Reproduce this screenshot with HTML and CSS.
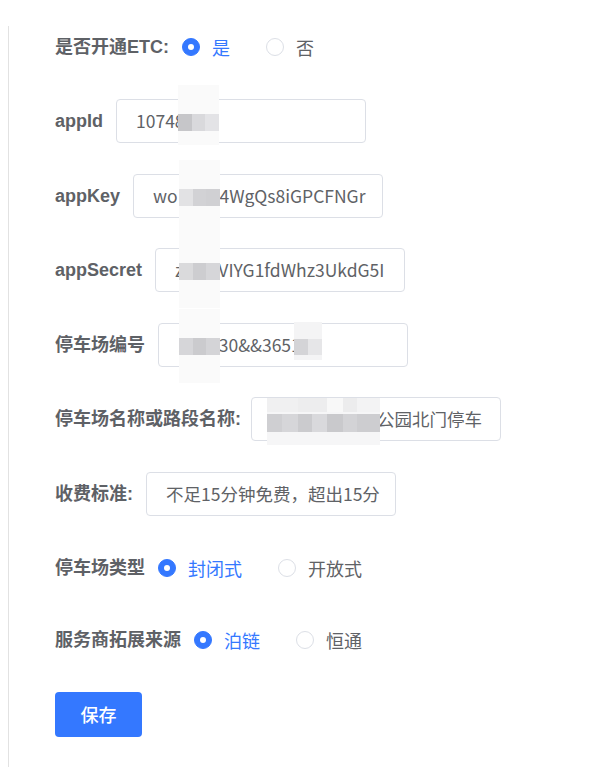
FILE: index.html
```html
<!DOCTYPE html>
<html lang="zh-CN">
<head>
<meta charset="utf-8">
<title>停车场配置</title>
<link rel="stylesheet" href="styles.css">
</head>
<body>
<div class="page">
  <form class="form">
    <div class="row row-radio">
      <span class="label">是否开通ETC:</span>
      <div class="radios">
        <span class="radio is-checked"><span class="circle"></span><span class="rtext">是</span></span>
        <span class="radio"><span class="circle"></span><span class="rtext">否</span></span>
      </div>
    </div>

    <div class="row row-input">
      <span class="label">appId</span>
      <div class="field">
        <div class="input"><span class="val">10748<span class="sp sp-40"></span></span></div>
        <div class="mosaic col m-appid"></div>
      </div>
    </div>

    <div class="row row-input">
      <span class="label">appKey</span>
      <div class="field">
        <div class="input"><span class="val">wo<span class="sp sp-42"></span>4WgQs8iGPCFNGr</span></div>
        <div class="mosaic col m-appkey"></div>
      </div>
    </div>

    <div class="row row-input">
      <span class="label">appSecret</span>
      <div class="field">
        <div class="input"><span class="val">z<span class="sp sp-35"></span>VIYG1fdWhz3UkdG5I</span></div>
        <div class="mosaic col m-secret"></div>
      </div>
    </div>

    <div class="row row-input">
      <span class="label">停车场编号</span>
      <div class="field">
        <div class="input"><span class="val">1<span class="sp sp-31"></span>30&amp;&amp;3651<span class="sp sp-28"></span></span></div>
        <div class="mosaic col m-code"></div>
        <div class="mosaic m-code2"></div>
      </div>
    </div>

    <div class="row row-input">
      <span class="label label-narrow">停车场名称或路段名称:</span>
      <div class="field">
        <div class="input"><span class="val"><span class="sp sp-106"></span>公园北门停车</span></div>
        <div class="mosaic m-name"></div>
      </div>
    </div>

    <div class="row row-input">
      <span class="label">收费标准:</span>
      <div class="field">
        <div class="input"><span class="val">不足15分钟免费，超出15分</span></div>
      </div>
    </div>

    <div class="row row-radio">
      <span class="label">停车场类型</span>
      <div class="radios">
        <span class="radio is-checked"><span class="circle"></span><span class="rtext">封闭式</span></span>
        <span class="radio"><span class="circle"></span><span class="rtext">开放式</span></span>
      </div>
    </div>

    <div class="row row-radio">
      <span class="label">服务商拓展来源</span>
      <div class="radios">
        <span class="radio is-checked"><span class="circle"></span><span class="rtext">泊链</span></span>
        <span class="radio"><span class="circle"></span><span class="rtext">恒通</span></span>
      </div>
    </div>

    <div class="row row-btn">
      <button type="button" class="btn">保存</button>
    </div>
  </form>
</div>
</body>
</html>
```

FILE: styles.css
```css
html, body {
  margin: 0;
  padding: 0;
  background: #ffffff;
}

body {
  font-family: "Noto Sans CJK SC", "Noto Sans", sans-serif;
  color: #606266;
  overflow: hidden;
}

.page {
  margin: 26.4px 0 0 8px;
  height: calc(100vh - 26.4px);
  border-left: 1px solid #e2e2e2;
  padding-left: 46px;
  box-sizing: border-box;
}

.form {
  display: flex;
  flex-direction: column;
  gap: 30.6px;
}

.row {
  display: flex;
  align-items: center;
}

.row-radio {
  height: 42px;
}

.row-input {
  height: 44px;
}

.label {
  font-family: "Liberation Sans", "Noto Sans CJK SC", sans-serif;
  font-weight: bold;
  font-size: 18px;
  line-height: 24px;
  color: #5e6166;
  margin-right: 13px;
  white-space: nowrap;
}

.label-narrow {
  margin-right: 10px;
}

/* radios */
.radios {
  display: flex;
  align-items: center;
  gap: 36px;
}

.radio {
  display: flex;
  align-items: center;
  gap: 12px;
}

.circle {
  width: 18px;
  height: 18px;
  box-sizing: border-box;
  border-radius: 50%;
  border: 1px solid #dcdfe6;
  background: #ffffff;
  display: flex;
  align-items: center;
  justify-content: center;
}

.is-checked .circle {
  border-color: #3478ff;
  background: #3478ff;
}

.is-checked .circle::after {
  content: "";
  width: 6px;
  height: 6px;
  border-radius: 50%;
  background: #ffffff;
}

.rtext {
  font-size: 18px;
  line-height: 24px;
  color: #606266;
}

.is-checked .rtext {
  color: #3478ff;
}

/* inputs */
.field {
  position: relative;
}

.input {
  width: 250px;
  height: 44px;
  box-sizing: border-box;
  border: 1px solid #dcdfe6;
  border-radius: 4px;
  padding: 0 15px 0 19px;
  display: flex;
  align-items: center;
  background: #ffffff;
}

.val {
  display: block;
  width: 100%;
  overflow: hidden;
  white-space: nowrap;
  font-size: 17.5px;
  line-height: 24px;
  color: #606266;
}

.sp {
  display: inline-block;
}
.sp-28 { width: 28px; }
.sp-31 { width: 31px; }
.sp-35 { width: 35px; }
.sp-40 { width: 40px; }
.sp-42 { width: 42px; }
.sp-106 { width: 106px; }

/* redaction mosaics (lie over the inputs) */
.mosaic {
  position: absolute;
}

.col {
  top: -14px;
  width: 41px;
  height: 74px;
  background-color: #fafafa;
  background-repeat: no-repeat;
  background-position: 0 29px;
  background-size: 100% 17px;
}

.m-appid {
  left: 62px;
  top: -14px;
  height: 60px;
  background-image: linear-gradient(to right, #c6c6c9 0 34%, #d9d9dc 34% 67%, #e3e3e6 67% 100%);
}

.m-appkey {
  left: 46px;
  background-image: linear-gradient(to right, #e2e2e4 0 34%, #d2d2d5 34% 67%, #d0d0d3 67% 100%);
}

.m-secret {
  left: 24px;
  background-image: linear-gradient(to right, #dadadc 0 34%, #cdcdd0 34% 67%, #d6d6d9 67% 100%);
}

.m-code {
  left: 21px;
  background-image: linear-gradient(to right, #d6d6d9 0 34%, #cbcbce 34% 67%, #d4d4d7 67% 100%);
}

.m-code2 {
  left: 136px;
  top: -1px;
  width: 28px;
  height: 38px;
  background: #f4f4f5;
  background-image: linear-gradient(to right, #d4d4d7 0 50%, #e6e6e8 50% 100%);
  background-repeat: no-repeat;
  background-position: 0 17px;
  background-size: 100% 16px;
}

.m-name {
  left: 16px;
  top: 1px;
  width: 113px;
  height: 47px;
  background-color: #f6f6f7;
  background-image:
    linear-gradient(to right, #cfcfd2 0 13%, #d6d6d9 13% 27%, #cbcbce 27% 40%, #d9d9dc 40% 53%, #c9c9cc 53% 67%, #d3d3d6 67% 80%, #cdcdd0 80% 100%),
    linear-gradient(to right, #f0f0f1 0 27%, #ededee 27% 53%, #f8f8f8 53% 67%, #ececed 67% 80%, #f3f3f4 80% 100%);
  background-repeat: no-repeat, no-repeat;
  background-position: 0 16px, 0 0;
  background-size: 100% 18px, 100% 14px;
}

/* button */
.row-btn {
  height: 45px;
}

.btn {
  width: 87px;
  height: 45px;
  border: none;
  border-radius: 4px;
  background: #3478ff;
  color: #ffffff;
  font-family: "Noto Sans CJK SC", sans-serif;
  font-size: 18px;
  font-weight: 500;
  padding: 0;
  cursor: pointer;
}
```
